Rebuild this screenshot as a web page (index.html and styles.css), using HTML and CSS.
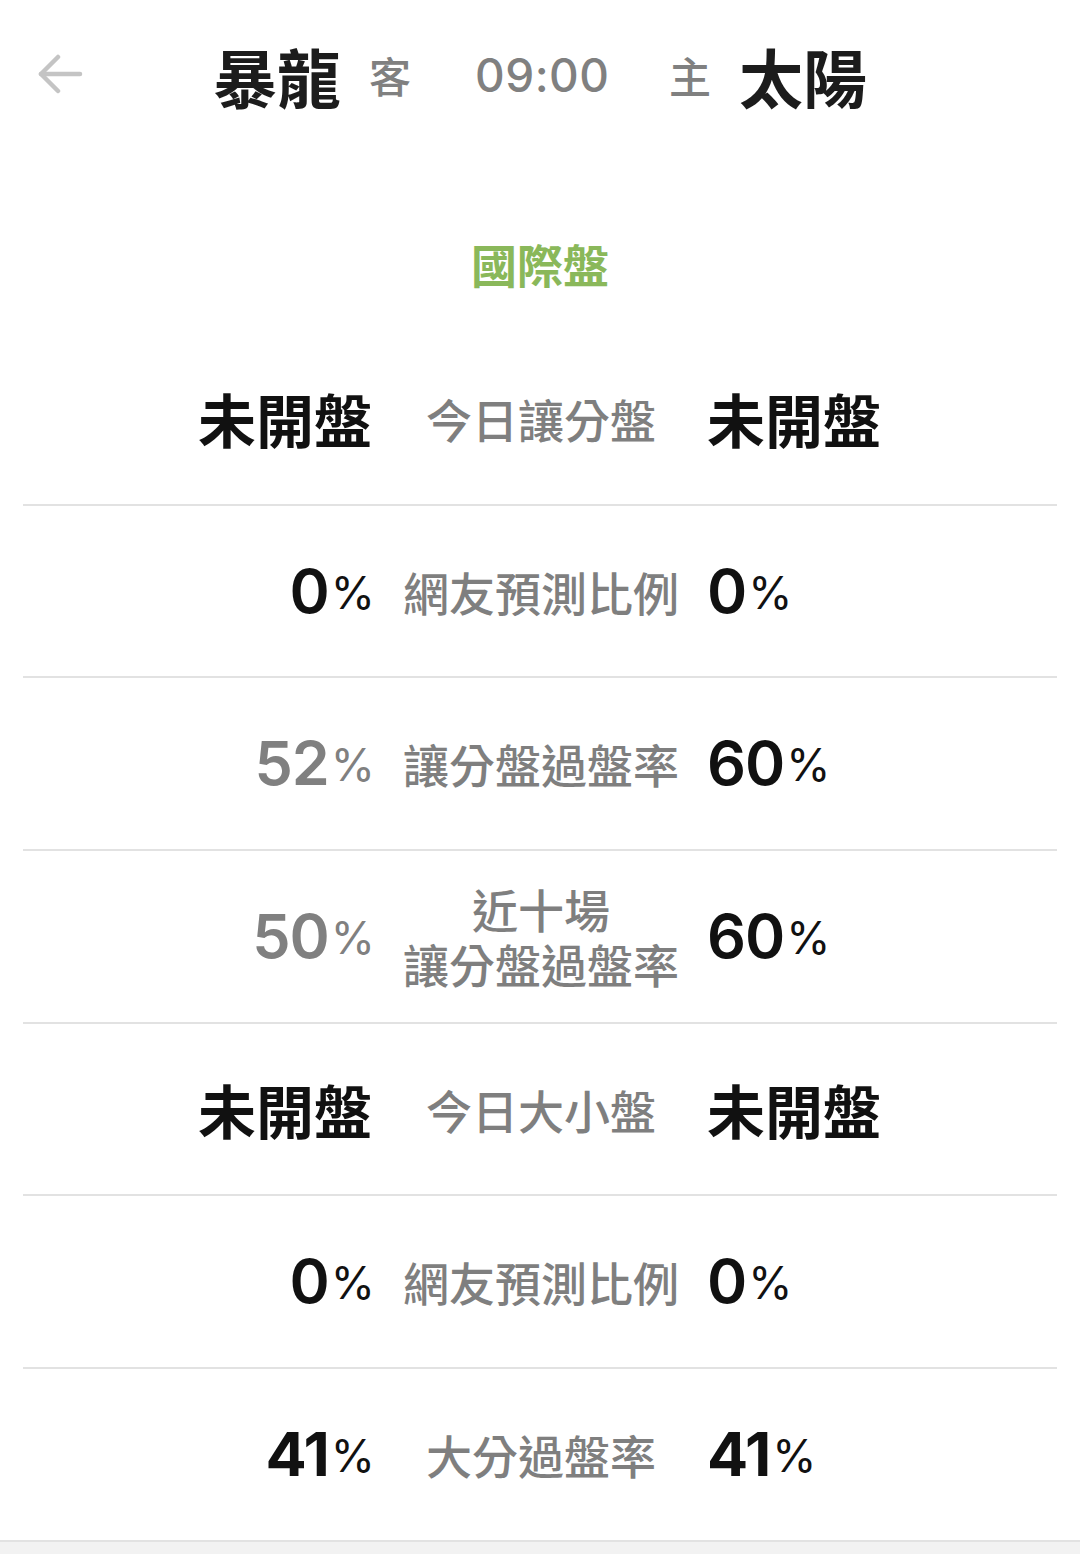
FILE: index.html
```html
<!DOCTYPE html>
<html lang="zh-Hant">
<head>
<meta charset="utf-8">
<title>暴龍 vs 太陽</title>
<link rel="stylesheet" href="styles.css">
</head>
<body>
<div class="page">
  <header class="header">
    <div class="side side-left">
      <span class="back" aria-label="返回">
        <svg width="46" height="40" viewBox="0 0 46 40" fill="none" stroke="#c4c4c4" stroke-width="4.5" stroke-linecap="round" stroke-linejoin="round">
          <path d="M21 3 L4 20 L21 37"/>
          <path d="M4 20 H43"/>
        </svg>
      </span>
      <span class="team-group">
        <span class="team">暴龍</span>
        <span class="role">客</span>
      </span>
    </div>
    <div class="time">09:00</div>
    <div class="side side-right">
      <span class="team-group">
        <span class="role">主</span>
        <span class="team">太陽</span>
      </span>
    </div>
  </header>

  <section class="section-title">國際盤</section>

  <section class="rows">
    <div class="row">
      <div class="cell left"><span class="text-val">未開盤</span></div>
      <div class="cell mid">今日讓分盤</div>
      <div class="cell right"><span class="text-val">未開盤</span></div>
    </div>
    <div class="row">
      <div class="cell left"><span class="num">0</span><span class="pct">%</span></div>
      <div class="cell mid">網友預測比例</div>
      <div class="cell right"><span class="num">0</span><span class="pct">%</span></div>
    </div>
    <div class="row">
      <div class="cell left muted"><span class="num">52</span><span class="pct">%</span></div>
      <div class="cell mid">讓分盤過盤率</div>
      <div class="cell right"><span class="num">60</span><span class="pct">%</span></div>
    </div>
    <div class="row">
      <div class="cell left muted"><span class="num">50</span><span class="pct">%</span></div>
      <div class="cell mid two-line">
        <div class="line">近十場</div>
        <div class="line">讓分盤過盤率</div>
      </div>
      <div class="cell right"><span class="num">60</span><span class="pct">%</span></div>
    </div>
    <div class="row">
      <div class="cell left"><span class="text-val">未開盤</span></div>
      <div class="cell mid">今日大小盤</div>
      <div class="cell right"><span class="text-val">未開盤</span></div>
    </div>
    <div class="row">
      <div class="cell left"><span class="num">0</span><span class="pct">%</span></div>
      <div class="cell mid">網友預測比例</div>
      <div class="cell right"><span class="num">0</span><span class="pct">%</span></div>
    </div>
    <div class="row last">
      <div class="cell left"><span class="num narrow">41</span><span class="pct">%</span></div>
      <div class="cell mid">大分過盤率</div>
      <div class="cell right"><span class="num narrow">41</span><span class="pct">%</span></div>
    </div>
  </section>

  <footer class="footer"></footer>
</div>
</body>
</html>
```

FILE: styles.css
```css
html, body {
  margin: 0;
  padding: 0;
  background: #ffffff;
}

body {
  font-family: "Noto Sans CJK TC", "Noto Sans", sans-serif;
  color: #111111;
}

.page {
  width: 1080px;
  min-height: 1554px;
  display: flex;
  flex-direction: column;
}

/* Header */
.header {
  height: 150px;
  display: grid;
  grid-template-columns: 1fr 130px 1fr;
  column-gap: 64px;
  align-items: center;
}

.side {
  display: flex;
  align-items: center;
}

.side-left {
  justify-content: space-between;
  padding-left: 37px;
}

.side-right {
  justify-content: flex-start;
}

.back {
  display: flex;
  align-items: center;
  margin-top: -3px;
}

.team-group {
  display: flex;
  align-items: center;
  gap: 28px;
}

.team {
  font-size: 64px;
  font-weight: 700;
  line-height: 1;
  color: #1c1c1c;
}

.role {
  font-size: 42px;
  font-weight: 500;
  line-height: 1;
  color: #808080;
}

.time {
  font-family: "Inter", "Liberation Sans", sans-serif;
  font-size: 46px;
  font-weight: 500;
  letter-spacing: 0.5px;
  color: #808080;
  text-align: center;
  line-height: 1;
}

/* Section title */
.section-title {
  height: 183px;
  box-sizing: border-box;
  padding-top: 86px;
  text-align: center;
  font-size: 46px;
  font-weight: 700;
  line-height: 54px;
  color: #8ab85a;
}

/* Rows */
.rows {
  margin: 0 23px;
}

.row {
  height: 170.7px;
  border-bottom: 2px solid #e2e2e2;
  display: grid;
  grid-template-columns: 352px 332px 1fr;
  align-items: center;
}

.row.last {
  border-bottom: none;
}

.cell {
  display: flex;
  align-items: center;
}

.cell.left {
  justify-content: flex-end;
}

.cell.right {
  justify-content: flex-start;
}

.cell.mid {
  justify-content: center;
  text-align: center;
  font-size: 46px;
  font-weight: 500;
  line-height: 55px;
  color: #7f7f7f;
}

.cell.mid.two-line {
  display: flex;
  flex-direction: column;
  align-items: center;
  gap: 0;
}

.cell.mid.two-line .line {
  height: 55px;
  line-height: 55px;
}

.text-val {
  font-size: 58px;
  font-weight: 700;
  line-height: 1;
  color: #111111;
}

.cell.left .text-val {
  margin-right: 3px;
}

.num {
  font-family: "Inter", "Liberation Sans", sans-serif;
  font-size: 61px;
  font-weight: 600;
  line-height: 1;
  letter-spacing: -1px;
  color: #111111;
}

.num.narrow {
  letter-spacing: -1px;
  font-weight: 700;
}

.pct {
  font-family: "Inter", "Liberation Sans", sans-serif;
  font-size: 45px;
  font-weight: 400;
  line-height: 1;
  color: #111111;
  margin-left: 2px;
  align-self: flex-end;
  margin-bottom: 7px;
}

.cell.muted .num,
.cell.muted .pct {
  color: #808080;
}

/* Footer band */
.footer {
  flex: 1;
  min-height: 10px;
  border-top: 2px solid #e2e2e2;
  background: #f2f2f2;
}
```
